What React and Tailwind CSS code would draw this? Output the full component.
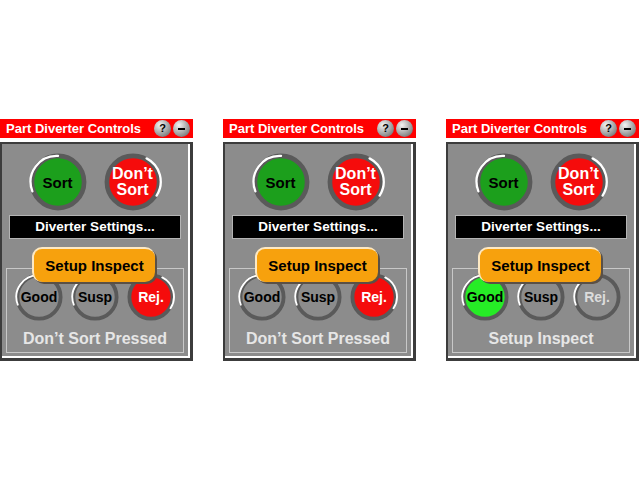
import React from 'react';

const arcs = {
  left: 'M 5.8 66.1 A 45 45 0 0 1 50 5',
  right: 'M 73.5 9.3 A 45 45 0 0 1 90.7 73.5',
};

const RoundButton = ({ size, fill, arc = 'left', textClass, children }) => {
  return (
    <div
      className="relative flex items-center justify-center shrink-0"
      style={{ width: size, height: size }}
    >
      <svg className="absolute inset-0" width={size} height={size} viewBox="0 0 100 100">
        <circle cx="50" cy="50" r="45" fill={fill} stroke="#5a5a5a" strokeWidth="8" />
        <path d={arcs[arc]} fill="none" stroke="#ffffff" strokeWidth="4" strokeLinecap="round" />
      </svg>
      <span className={`relative text-center leading-[1] font-bold ${textClass}`}>{children}</span>
    </div>
  );
};

const TitleKnob = ({ children }) => (
  <div className="w-[17px] h-[17px] rounded-full flex items-center justify-center bg-[radial-gradient(circle_at_35%_30%,#f4f4f4,#a0a0a0_55%,#5a5a5a)] text-black text-[11px] font-bold leading-none">
    {children}
  </div>
);

const Panel = ({ status, goodFill, goodText, rejFill, rejText, rejArc }) => {
  return (
    <div className="w-[193px] font-['Liberation_Sans',Arial,sans-serif]">
      {/* title bar */}
      <div className="h-[19px] bg-[#ff0000] flex items-center pl-[6px] pr-[3px]">
        <span className="text-white text-[13px] font-bold leading-none">Part Diverter Controls</span>
        <div className="ml-auto flex gap-[2px]">
          <TitleKnob>?</TitleKnob>
          <TitleKnob>
            <span className="block w-[7px] h-[2px] bg-black" />
          </TitleKnob>
        </div>
      </div>

      {/* body frame */}
      <div className="mt-[4px] bg-[#3c3c3c] pl-[2px] pt-[2px] pr-[3px] pb-[3px]">
        <div className="bg-[#8c8c8c] border-r-2 border-b-2 border-white pb-[3px]">
          <div className="flex justify-center gap-[17px] pt-[9px]">
            <RoundButton size={58} fill="#1c9f1c" arc="left" textClass="text-black text-[15px]">
              Sort
            </RoundButton>
            <RoundButton size={58} fill="#f50c0c" arc="right" textClass="text-white text-[16px] leading-[1.1]">
              Don’t
              <br />
              Sort
            </RoundButton>
          </div>

          <div className="mt-[4px] ml-[7px] w-[172px] h-[24px] border border-[#b4b4b4] bg-black flex items-center justify-center">
            <span className="text-white text-[13.5px] font-bold leading-none">Diverter Settings...</span>
          </div>

          <div className="relative z-10 mt-[8px] ml-[30px] w-[123px] h-[35px] rounded-[10px] bg-[#f7a10d] border-t-2 border-l-2 border-[#fde9c4] shadow-[2px_2px_0_#5a5046] flex items-center justify-center">
            <span className="text-black text-[15px] font-bold leading-none">Setup Inspect</span>
          </div>

          <div className="-mt-[14px] ml-[4px] w-[178px] h-[85px] border border-[#c8c8c8] pt-[4px]">
            <div className="flex justify-center gap-[8px]">
              <RoundButton size={48} fill={goodFill} arc="left" textClass={`text-[14px] ${goodText}`}>
                Good
              </RoundButton>
              <RoundButton size={48} fill="#8c8c8c" arc="left" textClass="text-black text-[14px]">
                Susp
              </RoundButton>
              <RoundButton size={48} fill={rejFill} arc={rejArc} textClass={`text-[14px] ${rejText}`}>
                Rej.
              </RoundButton>
            </div>
            <div className="mt-[10px] text-center text-[#e6e6e6] text-[16px] font-bold leading-[16px]">
              {status}
            </div>
          </div>
        </div>
      </div>
    </div>
  );
};

const App = () => {
  return (
    <div className="w-[640px] h-[480px] bg-white pt-[119px] flex gap-[30px]">
      <Panel status="Don’t Sort Pressed" goodFill="#8c8c8c" goodText="text-black" rejFill="#f50c0c" rejText="text-white" rejArc="right" />
      <Panel status="Don’t Sort Pressed" goodFill="#8c8c8c" goodText="text-black" rejFill="#f50c0c" rejText="text-white" rejArc="right" />
      <Panel status="Setup Inspect" goodFill="#26ec26" goodText="text-black" rejFill="#8c8c8c" rejText="text-[#dcdcdc]" rejArc="left" />
    </div>
  );
};

export default App;
